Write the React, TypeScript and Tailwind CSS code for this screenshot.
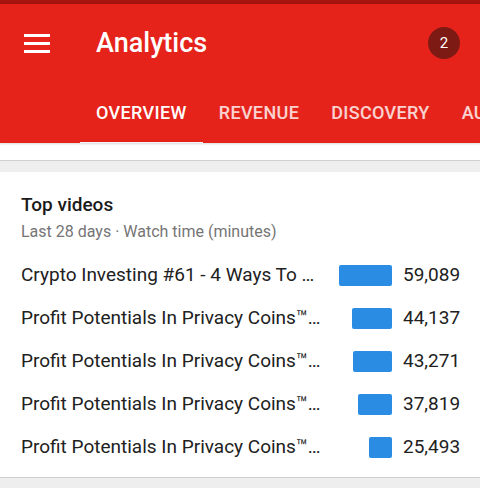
import React from "react";

const rows = [
  { title: "Crypto Investing #61 - 4 Ways To …", bar: 53, value: "59,089" },
  { title: "Profit Potentials In Privacy Coins™…", bar: 40, value: "44,137" },
  { title: "Profit Potentials In Privacy Coins™…", bar: 39, value: "43,271" },
  { title: "Profit Potentials In Privacy Coins™…", bar: 34, value: "37,819" },
  { title: "Profit Potentials In Privacy Coins™…", bar: 23, value: "25,493" },
];

export default function App() {
  return (
    <div
      className="w-[480px] h-[488px] overflow-hidden bg-[#eeeeee]"
      style={{ fontFamily: "Roboto, 'Noto Sans', sans-serif" }}
    >
      <div className="h-[4px] bg-[#a5140f]" />
      <header className="bg-[#e5231a] h-[139px] flex flex-col shadow-[0_1px_2px_rgba(0,0,0,0.15)] relative z-10">
        <div className="h-[78px] flex items-center pl-[24px] pr-[20px]">
          <svg width="26" height="19" viewBox="0 0 26 19" className="shrink-0">
            <rect x="0" y="0" width="26" height="3" fill="#ffffff" />
            <rect x="0" y="8" width="26" height="3" fill="#ffffff" />
            <rect x="0" y="16" width="26" height="3" fill="#ffffff" />
          </svg>
          <div className="ml-[46px] text-white text-[27px] font-medium leading-none flex-1">Analytics</div>
          <div className="w-[32px] h-[32px] rounded-full bg-[#7e1a14] text-white text-[15px] flex items-center justify-center">
            2
          </div>
        </div>
        <div className="flex-1 flex pl-[80px] whitespace-nowrap overflow-hidden">
          {["OVERVIEW", "REVENUE", "DISCOVERY", "AUDIENCE"].map((t, i) => (
            <div
              key={t}
              className={
                "relative px-4 flex items-center text-[18px] font-medium tracking-[0.35px] " +
                (i === 0 ? "text-white" : "text-white/80")
              }
            >
              {t}
              {i === 0 && <div className="absolute left-0 right-0 bottom-[-2px] h-[3px] bg-[#f4f4f4]" />}
            </div>
          ))}
        </div>
      </header>
      <div className="h-[18px] bg-white border-b border-[#cfcfcf]" />
      <div className="h-[11px]" />
      <section className="bg-white border-b border-[#cfcfcf] px-[21px] pt-[21px] pb-[8px]">
        <div className="text-[19px] font-medium leading-[24px] text-[#1a1a1a]">Top videos</div>
        <div className="mt-[4px] text-[16px] leading-[22px] text-[#757575]">Last 28 days · Watch time (minutes)</div>
        <div className="mt-[11px] flex flex-col">
          {rows.map((r) => (
            <div key={r.value} className="h-[43px] flex items-center">
              <div className="flex-1 min-w-0 truncate text-[19px] text-[#212121]">{r.title}</div>
              <div className="w-[62px] shrink-0 flex justify-end">
                <div className="h-[21px] rounded-[2px] bg-[#2a8de3]" style={{ width: r.bar }} />
              </div>
              <div className="ml-[11px] w-[56px] shrink-0 text-right text-[19px] text-[#212121]">{r.value}</div>
            </div>
          ))}
        </div>
      </section>
    </div>
  );
}
